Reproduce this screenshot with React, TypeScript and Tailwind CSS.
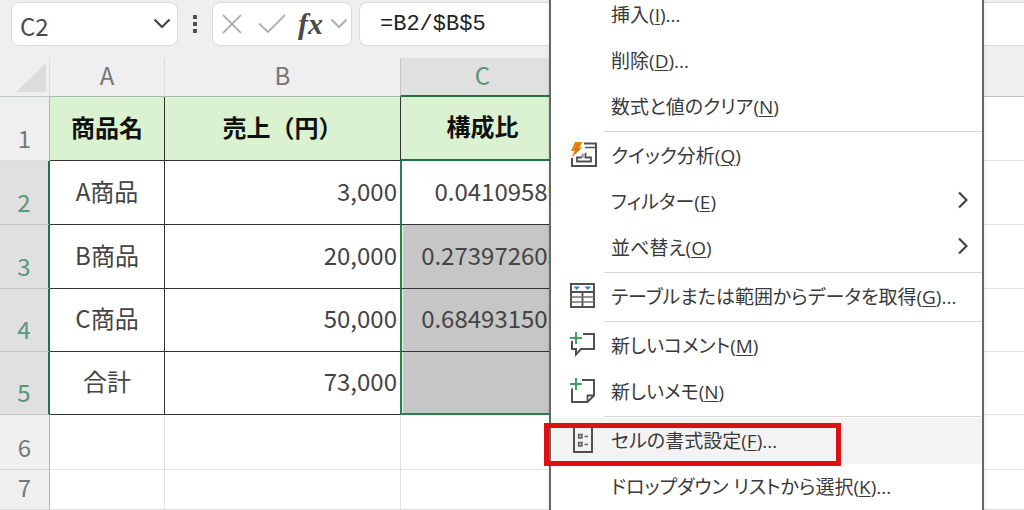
import type { ReactNode } from 'react';
import clsx from 'clsx';

type MenuEntry = {
  label: string;
  accessKey: string;
  more?: boolean;
  submenu?: boolean;
  active?: boolean;
  icon?: ReactNode;
};

const QuickAnalysisIcon = () => (
  <svg viewBox="0 0 28 28" className="h-7 w-7" fill="none" aria-hidden="true">
    <path d="M14 1.500H26V24H2V16" stroke="#505050" strokeWidth="2" />
    <path d="M15 5.500H26" stroke="#505050" strokeWidth="1.500" />
    <path d="M7 19.500V15.500H11L15.500 12V15.500H21V19.500Z" stroke="#505050" strokeWidth="1.800" />
    <path d="M11.500 11.500H15V15.500H11.500Z" fill="#a8a8a8" />
    <path d="M5 0H12.500L9.500 5.500H12.500L1.500 15.500L4.500 9H1Z" fill="#e8850c" />
    <path d="M9 2L5 7.500H9L5 12" stroke="#b8620c" strokeWidth="0.700" />
  </svg>
);

const TableIcon = () => (
  <svg viewBox="0 0 28 28" className="h-7 w-7" fill="none" aria-hidden="true">
    <path d="M1 1H24V24H1Z" fill="#fff" stroke="#505050" strokeWidth="2" />
    <path d="M1 9H24M12.500 9V24" stroke="#505050" strokeWidth="1.800" />
    <path d="M1 14H24M1 19H24" stroke="#77706a" strokeWidth="1.500" />
    <path d="M3.500 3.500H10L6.750 7ZM14.500 3.500H21L17.750 7Z" fill="#1e86c8" />
  </svg>
);

const CommentIcon = () => (
  <svg viewBox="0 0 28 28" className="h-7 w-7" fill="none" aria-hidden="true">
    <path d="M13 2H24V17H11L6 22.500V17H2V9" stroke="#505050" strokeWidth="2" />
    <path d="M6 0V12M0 6H12" stroke="#3fa35c" strokeWidth="2" />
  </svg>
);

const NoteIcon = () => (
  <svg viewBox="0 0 28 28" className="h-7 w-7" fill="none" aria-hidden="true">
    <path d="M12 2H24V17.500L17.500 24H2V10.500" stroke="#505050" strokeWidth="2" />
    <path d="M17.500 24V17.500H24" stroke="#505050" strokeWidth="1.800" />
    <path d="M6 0V12M0 6H12" stroke="#3fa35c" strokeWidth="2" />
  </svg>
);

const FormatCellsIcon = () => (
  <svg viewBox="0 0 28 28" className="h-7 w-7" fill="none" aria-hidden="true">
    <path d="M4 0H22V25H4Z" stroke="#505050" strokeWidth="2" />
    <path d="M8.500 7.500H12V11H8.500ZM8.500 15.500H12V19H8.500Z" fill="#b5b5b5" stroke="#606060" strokeWidth="1.300" />
    <path d="M14.500 9.500H18M14.500 17.500H18" stroke="#606060" strokeWidth="1.500" />
  </svg>
);

const ChevronDown = ({ className }: { className?: string }) => (
  <svg viewBox="0 0 18 12" className={clsx('h-3 w-[18px] shrink-0', className)} fill="none" stroke="currentColor" strokeWidth="2.200" aria-hidden="true">
    <path d="M1.500 1.500L9 9L16.500 1.500" />
  </svg>
);

const menuGroups: MenuEntry[][] = [
  [
    { label: '挿入', accessKey: 'I', more: true },
    { label: '削除', accessKey: 'D', more: true },
    { label: '数式と値のクリア', accessKey: 'N' },
  ],
  [
    { label: 'クイック分析', accessKey: 'Q', icon: <QuickAnalysisIcon /> },
    { label: 'フィルター', accessKey: 'E', submenu: true },
    { label: '並べ替え', accessKey: 'O', submenu: true },
  ],
  [{ label: 'テーブルまたは範囲からデータを取得', accessKey: 'G', more: true, icon: <TableIcon /> }],
  [
    { label: '新しいコメント', accessKey: 'M', icon: <CommentIcon /> },
    { label: '新しいメモ', accessKey: 'N', icon: <NoteIcon /> },
  ],
  [
    { label: 'セルの書式設定', accessKey: 'F', more: true, active: true, icon: <FormatCellsIcon /> },
    { label: 'ドロップダウン リストから選択', accessKey: 'K', more: true },
  ],
];

const rows = [
  { id: 2, name: 'A商品', sales: '3,000', ratio: '0.04109589', height: 'h-16' },
  { id: 3, name: 'B商品', sales: '20,000', ratio: '0.273972603', height: 'h-16' },
  { id: 4, name: 'C商品', sales: '50,000', ratio: '0.684931507', height: 'h-[63px]' },
  { id: 5, name: '合計', sales: '73,000', ratio: '', height: 'h-[63px]' },
];

const FormulaBar = () => (
  <div className="flex items-start bg-[#efefef] pt-[2px] pb-3 pl-[11px]">
    <div className="flex h-11 w-[167px] items-center rounded-lg border border-[#dadada] bg-white pr-1.5 pl-2">
      <input
        aria-label="名前ボックス"
        defaultValue="C2"
        className="w-full min-w-0 flex-1 bg-transparent pt-1 text-2xl text-[#4a4a4a] outline-none"
      />
      <button type="button" aria-label="名前の一覧" className="text-[#444]">
        <ChevronDown />
      </button>
    </div>
    <div className="flex h-11 w-[34px] flex-col items-center justify-center gap-[3px]">
      <span className="h-1 w-1 bg-[#505050]" />
      <span className="h-1 w-1 bg-[#505050]" />
      <span className="h-1 w-1 bg-[#505050]" />
    </div>
    <div className="flex h-11 w-[140px] items-center rounded-lg border border-[#dadada] bg-white pr-[3px] pl-[9px] text-[#b0b0b0]">
      <button type="button" aria-label="キャンセル">
        <svg viewBox="0 0 20 20" className="h-5 w-5" fill="none" stroke="currentColor" strokeWidth="1.800">
          <path d="M1 1L19 19M19 1L1 19" />
        </svg>
      </button>
      <button type="button" aria-label="入力" className="ml-4">
        <svg viewBox="0 0 28 20" className="h-5 w-7" fill="none" stroke="currentColor" strokeWidth="1.800">
          <path d="M1 9.500L10 18L27 1" />
        </svg>
      </button>
      <button
        type="button"
        aria-label="関数の挿入"
        className="ml-3 flex-1 text-left font-['Liberation_Serif',serif] text-[30px] leading-8 font-bold text-[#4a4a4a] italic"
      >
        fx
      </button>
      <button type="button" aria-label="関数の一覧">
        <ChevronDown />
      </button>
    </div>
    <input
      aria-label="数式バー"
      defaultValue="=B2/$B$5"
      className="ml-[7px] h-11 min-w-0 flex-1 rounded-l-lg border border-r-0 border-[#dadada] bg-white pl-5 font-['Liberation_Mono',monospace] text-[22px] text-[#222] outline-none"
    />
  </div>
);

const RowHeader = ({ id, selected }: { id: number; selected?: boolean }) => (
  <th
    scope="row"
    className={clsx(
      'border-b pb-2 align-bottom font-normal',
      selected
        ? 'border-r-2 border-r-[#217346] border-b-[#c4c4c4] bg-[#e0e0e0] text-[#5a9678]'
        : 'border-r border-r-[#b5b5b5] border-b-[#d8d8d8] bg-[#efefef] text-[#777]',
    )}
  >
    {id}
  </th>
);

const Sheet = () => (
  <table className="w-full table-fixed border-separate border-spacing-0 text-2xl leading-7 whitespace-nowrap text-[#444]">
    <colgroup>
      <col className="w-[50px]" />
      <col className="w-[115px]" />
      <col className="w-[235px]" />
      <col className="w-[164px]" />
      <col />
    </colgroup>
    <thead>
      <tr className="h-[39px] bg-[#efefef] text-[#777]">
        <td className="border-r border-b border-r-[#dcdcdc] border-b-[#b9c4bb]">
          <svg viewBox="0 0 30 29" className="ml-4 h-[29px] w-[30px]" aria-hidden="true">
            <path d="M30 0V29H0Z" fill="#dcdcdc" />
          </svg>
        </td>
        <th scope="col" className="border-r border-b border-r-[#dcdcdc] border-b-[#a9b8aa] pb-1 font-normal">A</th>
        <th scope="col" className="border-b border-[#a9b8aa] pb-1 font-normal">B</th>
        <th scope="col" className="border-b-2 border-l border-b-[#217346] border-l-[#c4c4c4] bg-[#e0e0e0] pb-1 font-normal text-[#5a9678]">C</th>
        <td className="border-b border-[#c0c0c0]" />
      </tr>
    </thead>
    <tbody>
      <tr className="h-16">
        <RowHeader id={1} />
        <th scope="col" className="border-r border-b border-[#333] bg-[#daf2d0] pb-1 text-[#111]">商品名</th>
        <th scope="col" className="border-b border-[#333] bg-[#daf2d0] pb-1 text-[#111]">売上（円）</th>
        <th scope="col" className="border-b-2 border-l border-b-[#217346] border-l-[#333] bg-[#daf2d0] pb-1 text-[#111]">構成比</th>
        <td className="border-b border-[#e1e1e1]" />
      </tr>
      {rows.map((row, index) => (
        <tr key={row.id} className={row.height}>
          <RowHeader id={row.id} selected />
          <td className="border-r border-b border-[#333] pb-1 text-center">{row.name}</td>
          <td className="border-b border-[#333] pr-[3px] pb-1 text-right">{row.sales}</td>
          <td
            className={clsx(
              'border-l-2 border-l-[#2c8050] pr-[3px] pb-1 text-right',
              index > 0 && 'bg-[#c6c6c6] shadow-[inset_1px_0_0_#e6f1ea]',
              index === rows.length - 1 ? 'border-b-2 border-b-[#2c8050]' : 'border-b border-b-[#333]',
            )}
          >
            {row.ratio}
          </td>
          <td className="border-b border-[#e1e1e1]" />
        </tr>
      ))}
      <tr className="h-[55px]">
        <RowHeader id={6} />
        <td className="border-r border-b border-[#e1e1e1]" />
        <td className="border-b border-[#e1e1e1]" />
        <td className="border-b border-l border-[#e1e1e1]" />
        <td className="border-b border-[#e1e1e1]" />
      </tr>
      <tr className="h-10">
        <RowHeader id={7} />
        <td className="border-r border-b border-[#e1e1e1]" />
        <td className="border-b border-[#e1e1e1]" />
        <td className="border-b border-l border-[#e1e1e1]" />
        <td className="border-b border-[#e1e1e1]" />
      </tr>
    </tbody>
  </table>
);

const MenuItem = ({ item }: { item: MenuEntry }) => (
  <li role="none" className="relative">
    <button
      type="button"
      role="menuitem"
      className={clsx('flex h-[46px] w-full items-center pr-3.5 pl-[19px] text-left', item.active && 'bg-[#f3f3f3]')}
    >
      <span className="mr-[13px] h-7 w-7 shrink-0">{item.icon}</span>
      <span className="flex-1">
        {item.label}(<span className="underline decoration-1 underline-offset-2">{item.accessKey}</span>){item.more && '...'}
      </span>
      {item.submenu && (
        <svg viewBox="0 0 10 18" className="mb-1 h-[18px] w-2.5" fill="none" stroke="#444" strokeWidth="2.200" aria-hidden="true">
          <path d="M1 1.500L8.500 9L1 16.500" />
        </svg>
      )}
    </button>
    {/* Red callout around the highlighted command */}
    {item.active && (
      <span className="pointer-events-none absolute top-[5px] -left-[7px] h-[43px] w-[297px] border-[5px] border-[#dd1012]" />
    )}
  </li>
);

const ContextMenu = () => (
  <div
    role="menu"
    className="absolute -top-2 left-[549px] w-[435px] border-x-2 border-[#666] bg-white pb-4 font-['Open_Sans','Noto_Sans_CJK_JP',sans-serif] text-[19px] leading-7 whitespace-nowrap text-[#3a3a3a] shadow-md [font-feature-settings:'palt']"
  >
    {menuGroups.map((group, index) => (
      <ul key={group[0].label} role="group">
        {index > 0 && <li role="separator" className="my-px ml-[53px] h-px bg-[#d6d6d6]" />}
        {group.map((item) => (
          <MenuItem key={item.label} item={item} />
        ))}
      </ul>
    ))}
  </div>
);

export default function App() {
  return (
    <div className="relative h-screen overflow-hidden bg-white font-['Noto_Sans_CJK_JP',sans-serif]">
      <FormulaBar />
      <Sheet />
      <ContextMenu />
    </div>
  );
}
